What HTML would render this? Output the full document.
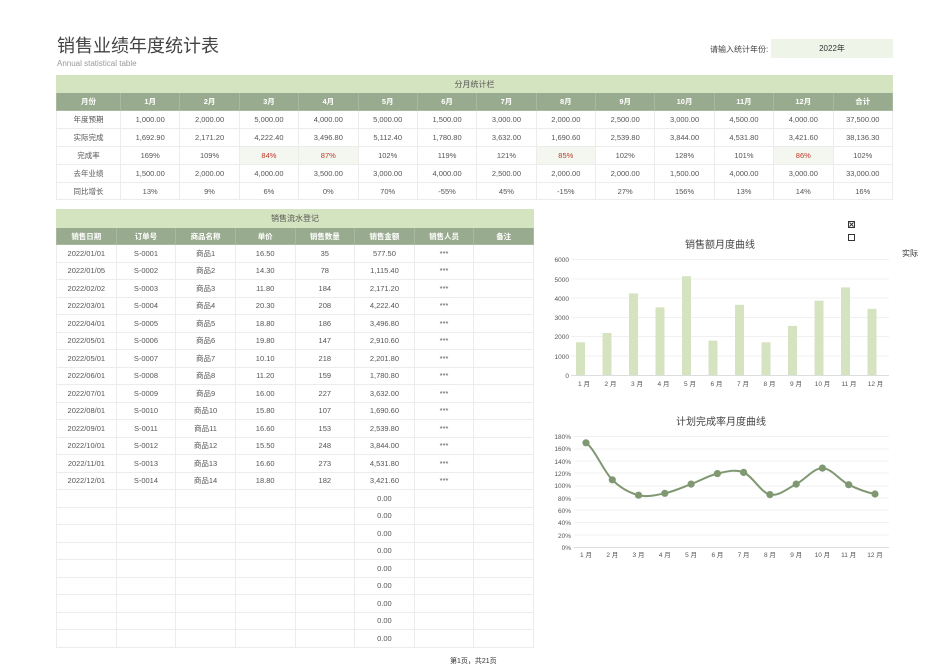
<!DOCTYPE html>
<html><head><meta charset="utf-8"><style>
*{margin:0;padding:0;box-sizing:border-box}
body{width:950px;height:672px;background:#fff;position:relative;overflow:hidden;font-family:"Liberation Sans","Noto Sans CJK SC",sans-serif;color:#555}
.abs{position:absolute}
table{border-collapse:collapse;table-layout:fixed;position:absolute}
td{border:1px solid #ececec;text-align:center;font-size:7.5px;color:#555;white-space:nowrap;overflow:hidden;padding:0}
tr.t td{background:#d5e4c0;color:#555;font-size:8px;border-color:#d5e4c0}
tr.h td{background:#98ab8e;color:#fff;font-weight:bold;border-color:#a9b9a0}
td.r{color:#c0392b;background:#f3f7ef}
</style></head><body>
<div class="abs" style="left:57px;top:35px;font-size:18px;line-height:22px;color:#444">销售业绩年度统计表</div>
<div class="abs" style="left:57px;top:59px;font-size:8px;line-height:10px;color:#999">Annual statistical table</div>
<div class="abs" style="left:710px;top:44px;font-size:8px;color:#444">请输入统计年份:</div>
<div class="abs" style="left:771px;top:39px;width:122px;height:19px;background:#eef5e8;font-size:8px;color:#333;text-align:center;line-height:19px">2022年</div>

<table style="left:56px;top:75px;width:837px">
<colgroup><col style="width:64px"><col span="13"></colgroup>
<tr class="t" style="height:17px"><td colspan="14">分月统计栏</td></tr>
<tr class="h" style="height:18px"><td>月份</td><td>1月</td><td>2月</td><td>3月</td><td>4月</td><td>5月</td><td>6月</td><td>7月</td><td>8月</td><td>9月</td><td>10月</td><td>11月</td><td>12月</td><td>合计</td></tr>
<tr style="height:18px"><td>年度预期</td><td>1,000.00</td><td>2,000.00</td><td>5,000.00</td><td>4,000.00</td><td>5,000.00</td><td>1,500.00</td><td>3,000.00</td><td>2,000.00</td><td>2,500.00</td><td>3,000.00</td><td>4,500.00</td><td>4,000.00</td><td>37,500.00</td></tr>
<tr style="height:18px"><td>实际完成</td><td>1,692.90</td><td>2,171.20</td><td>4,222.40</td><td>3,496.80</td><td>5,112.40</td><td>1,780.80</td><td>3,632.00</td><td>1,690.60</td><td>2,539.80</td><td>3,844.00</td><td>4,531.80</td><td>3,421.60</td><td>38,136.30</td></tr>
<tr style="height:18px"><td>完成率</td><td>169%</td><td>109%</td><td class="r">84%</td><td class="r">87%</td><td>102%</td><td>119%</td><td>121%</td><td class="r">85%</td><td>102%</td><td>128%</td><td>101%</td><td class="r">86%</td><td>102%</td></tr>
<tr style="height:18px"><td>去年业绩</td><td>1,500.00</td><td>2,000.00</td><td>4,000.00</td><td>3,500.00</td><td>3,000.00</td><td>4,000.00</td><td>2,500.00</td><td>2,000.00</td><td>2,000.00</td><td>1,500.00</td><td>4,000.00</td><td>3,000.00</td><td>33,000.00</td></tr>
<tr style="height:17px"><td>同比增长</td><td>13%</td><td>9%</td><td>6%</td><td>0%</td><td>70%</td><td>-55%</td><td>45%</td><td>-15%</td><td>27%</td><td>156%</td><td>13%</td><td>14%</td><td>16%</td></tr>
</table>

<table style="left:56px;top:209px;width:478px">
<tr class="t" style="height:18px"><td colspan="8">销售流水登记</td></tr>
<tr class="h" style="height:17px"><td>销售日期</td><td>订单号</td><td>商品名称</td><td>单价</td><td>销售数量</td><td>销售金额</td><td>销售人员</td><td>备注</td></tr>
<tr style="height:17.5px"><td>2022/01/01</td><td>S-0001</td><td>商品1</td><td>16.50</td><td>35</td><td>577.50</td><td>***</td><td></td></tr>
<tr style="height:17.5px"><td>2022/01/05</td><td>S-0002</td><td>商品2</td><td>14.30</td><td>78</td><td>1,115.40</td><td>***</td><td></td></tr>
<tr style="height:17.5px"><td>2022/02/02</td><td>S-0003</td><td>商品3</td><td>11.80</td><td>184</td><td>2,171.20</td><td>***</td><td></td></tr>
<tr style="height:17.5px"><td>2022/03/01</td><td>S-0004</td><td>商品4</td><td>20.30</td><td>208</td><td>4,222.40</td><td>***</td><td></td></tr>
<tr style="height:17.5px"><td>2022/04/01</td><td>S-0005</td><td>商品5</td><td>18.80</td><td>186</td><td>3,496.80</td><td>***</td><td></td></tr>
<tr style="height:17.5px"><td>2022/05/01</td><td>S-0006</td><td>商品6</td><td>19.80</td><td>147</td><td>2,910.60</td><td>***</td><td></td></tr>
<tr style="height:17.5px"><td>2022/05/01</td><td>S-0007</td><td>商品7</td><td>10.10</td><td>218</td><td>2,201.80</td><td>***</td><td></td></tr>
<tr style="height:17.5px"><td>2022/06/01</td><td>S-0008</td><td>商品8</td><td>11.20</td><td>159</td><td>1,780.80</td><td>***</td><td></td></tr>
<tr style="height:17.5px"><td>2022/07/01</td><td>S-0009</td><td>商品9</td><td>16.00</td><td>227</td><td>3,632.00</td><td>***</td><td></td></tr>
<tr style="height:17.5px"><td>2022/08/01</td><td>S-0010</td><td>商品10</td><td>15.80</td><td>107</td><td>1,690.60</td><td>***</td><td></td></tr>
<tr style="height:17.5px"><td>2022/09/01</td><td>S-0011</td><td>商品11</td><td>16.60</td><td>153</td><td>2,539.80</td><td>***</td><td></td></tr>
<tr style="height:17.5px"><td>2022/10/01</td><td>S-0012</td><td>商品12</td><td>15.50</td><td>248</td><td>3,844.00</td><td>***</td><td></td></tr>
<tr style="height:17.5px"><td>2022/11/01</td><td>S-0013</td><td>商品13</td><td>16.60</td><td>273</td><td>4,531.80</td><td>***</td><td></td></tr>
<tr style="height:17.5px"><td>2022/12/01</td><td>S-0014</td><td>商品14</td><td>18.80</td><td>182</td><td>3,421.60</td><td>***</td><td></td></tr>
<tr style="height:17.5px"><td></td><td></td><td></td><td></td><td></td><td>0.00</td><td></td><td></td></tr>
<tr style="height:17.5px"><td></td><td></td><td></td><td></td><td></td><td>0.00</td><td></td><td></td></tr>
<tr style="height:17.5px"><td></td><td></td><td></td><td></td><td></td><td>0.00</td><td></td><td></td></tr>
<tr style="height:17.5px"><td></td><td></td><td></td><td></td><td></td><td>0.00</td><td></td><td></td></tr>
<tr style="height:17.5px"><td></td><td></td><td></td><td></td><td></td><td>0.00</td><td></td><td></td></tr>
<tr style="height:17.5px"><td></td><td></td><td></td><td></td><td></td><td>0.00</td><td></td><td></td></tr>
<tr style="height:17.5px"><td></td><td></td><td></td><td></td><td></td><td>0.00</td><td></td><td></td></tr>
<tr style="height:17.5px"><td></td><td></td><td></td><td></td><td></td><td>0.00</td><td></td><td></td></tr>
<tr style="height:17.5px"><td></td><td></td><td></td><td></td><td></td><td>0.00</td><td></td><td></td></tr>
</table>
<div class="abs" style="left:450px;top:656px;font-size:7px;color:#333">第1页，共21页</div>

<svg class="abs" style="left:0;top:0" width="950" height="672" font-family="Liberation Sans, Noto Sans CJK SC, sans-serif">
<g font-size="8" fill="#555">
<rect x="848.5" y="221.5" width="6" height="6" fill="none" stroke="#333"/><path d="M849.5 222.5l4 4M853.5 222.5l-4 4" stroke="#333"/>
<rect x="848.5" y="234.5" width="6" height="6" fill="none" stroke="#333"/>
<text x="902" y="256" font-size="8" fill="#333">实际</text>
<text x="720" y="248" font-size="10" text-anchor="middle" fill="#444">销售额月度曲线</text>
</g>
<g stroke="#f0f0f0" stroke-width="1">
<line x1="571" y1="259.5" x2="889" y2="259.5"/><line x1="571" y1="279" x2="889" y2="279"/><line x1="571" y1="298" x2="889" y2="298"/><line x1="571" y1="317.5" x2="889" y2="317.5"/><line x1="571" y1="336.5" x2="889" y2="336.5"/><line x1="571" y1="356" x2="889" y2="356"/>
</g>
<line x1="571" y1="375.5" x2="889" y2="375.5" stroke="#ddd"/>
<g font-size="6.5" fill="#555" text-anchor="end">
<text x="569" y="262">6000</text><text x="569" y="282">5000</text><text x="569" y="301">4000</text><text x="569" y="320">3000</text><text x="569" y="339">2000</text><text x="569" y="359">1000</text><text x="569" y="378">0</text>
</g>
<g fill="#d6e3c1">
<rect x="576" y="342.3" width="9" height="32.7"/>
<rect x="602.5" y="333" width="9" height="42"/>
<rect x="629" y="293.4" width="9" height="81.6"/>
<rect x="655.5" y="307.4" width="9" height="67.6"/>
<rect x="682" y="276.2" width="9" height="98.8"/>
<rect x="708.5" y="340.6" width="9" height="34.4"/>
<rect x="735" y="304.8" width="9" height="70.2"/>
<rect x="761.5" y="342.3" width="9" height="32.7"/>
<rect x="788" y="325.9" width="9" height="49.1"/>
<rect x="814.5" y="300.7" width="9" height="74.3"/>
<rect x="841" y="287.4" width="9" height="87.6"/>
<rect x="867.5" y="308.9" width="9" height="66.1"/>
</g>
<g font-size="6.5" fill="#555" text-anchor="middle">
<text x="584" y="386">1 月</text><text x="610.5" y="386">2 月</text><text x="637" y="386">3 月</text><text x="663.5" y="386">4 月</text><text x="690" y="386">5 月</text><text x="716.5" y="386">6 月</text><text x="743" y="386">7 月</text><text x="769.5" y="386">8 月</text><text x="796" y="386">9 月</text><text x="822.5" y="386">10 月</text><text x="849" y="386">11 月</text><text x="875.5" y="386">12 月</text>
</g>

<text x="721" y="425" font-size="10" text-anchor="middle" fill="#444">计划完成率月度曲线</text>
<g stroke="#f0f0f0">
<line x1="574" y1="436.5" x2="889" y2="436.5"/><line x1="574" y1="449" x2="889" y2="449"/><line x1="574" y1="461" x2="889" y2="461"/><line x1="574" y1="473" x2="889" y2="473"/><line x1="574" y1="486" x2="889" y2="486"/><line x1="574" y1="498" x2="889" y2="498"/><line x1="574" y1="510" x2="889" y2="510"/><line x1="574" y1="522.5" x2="889" y2="522.5"/><line x1="574" y1="535" x2="889" y2="535"/>
</g>
<line x1="574" y1="547.5" x2="889" y2="547.5" stroke="#ddd"/>
<g font-size="6.5" fill="#555" text-anchor="end">
<text x="571" y="439">180%</text><text x="571" y="451">160%</text><text x="571" y="464">140%</text><text x="571" y="476">120%</text><text x="571" y="488">100%</text><text x="571" y="501">80%</text><text x="571" y="513">60%</text><text x="571" y="525">40%</text><text x="571" y="538">20%</text><text x="571" y="550">0%</text>
</g>
<path d="M586 442.8C594.8 449 603.5 471.1 612.3 479.8C621 488.5 629.8 492.950 638.5 495.2C647.3 497.45 656 495.15 664.8 493.3C673.6 491.45 682.3 487.4 691.1 484.1C699.9 480.8 708.6 475.55 717.4 473.6C726.2 471.65 734.9 468.9 743.6 472.4C752.4 475.9 761.1 492.65 769.9 494.6C778.7 496.55 787.4 488.5 796.2 484.1C805 479.7 813.7 468 822.4 468.1C831.2 468.2 839.9 480.4 848.7 484.7C857.5 489 866.2 492.45 875 494" fill="none" stroke="#7f9872" stroke-width="2"/>
<g fill="#7f9872">
<circle cx="586" cy="442.8" r="3.6"/><circle cx="612.3" cy="479.8" r="3.6"/><circle cx="638.5" cy="495.2" r="3.6"/><circle cx="664.8" cy="493.3" r="3.6"/><circle cx="691.1" cy="484.1" r="3.6"/><circle cx="717.4" cy="473.6" r="3.6"/><circle cx="743.6" cy="472.4" r="3.6"/><circle cx="769.9" cy="494.6" r="3.6"/><circle cx="796.2" cy="484.1" r="3.6"/><circle cx="822.4" cy="468.1" r="3.6"/><circle cx="848.7" cy="484.7" r="3.6"/><circle cx="875" cy="494" r="3.6"/>
</g>
<g font-size="6.5" fill="#555" text-anchor="middle">
<text x="586" y="557">1 月</text><text x="612.3" y="557">2 月</text><text x="638.5" y="557">3 月</text><text x="664.8" y="557">4 月</text><text x="691.1" y="557">5 月</text><text x="717.4" y="557">6 月</text><text x="743.6" y="557">7 月</text><text x="769.9" y="557">8 月</text><text x="796.2" y="557">9 月</text><text x="822.4" y="557">10 月</text><text x="848.7" y="557">11 月</text><text x="875" y="557">12 月</text>
</g>
</svg>
</body></html>
